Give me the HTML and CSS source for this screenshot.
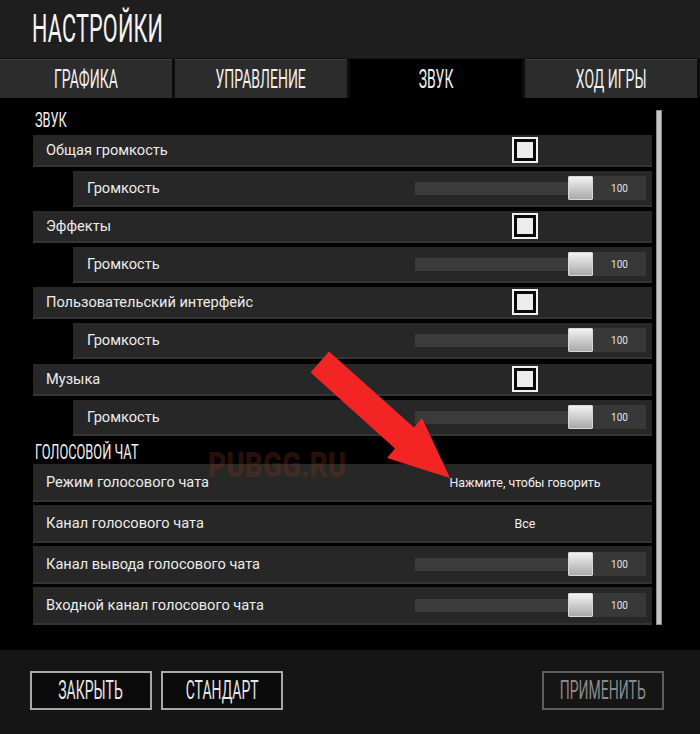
FILE: index.html
```html
<!DOCTYPE html>
<html lang="ru">
<head>
<meta charset="utf-8">
<title>Настройки</title>
<link rel="stylesheet" href="styles.css">
</head>
<body>
<div class="page">
  <header class="header">
    <h1 class="title"><span class="cond">НАСТРОЙКИ</span></h1>
  </header>
  <nav class="tabs">
    <div class="tab"><span class="cond">ГРАФИКА</span></div>
    <div class="tab"><span class="cond">УПРАВЛЕНИЕ</span></div>
    <div class="tab active"><span class="cond">ЗВУК</span></div>
    <div class="tab"><span class="cond">ХОД ИГРЫ</span></div>
  </nav>
  <main class="content">
    <div class="list">
      <h2 class="section first"><span class="cond">ЗВУК</span></h2>

      <div class="row"><span class="label">Общая громкость</span><div class="ctl"><span class="check"><span class="check-fill"></span></span></div></div>
      <div class="row sub"><span class="label">Громкость</span><div class="slider"><div class="track"></div><div class="thumb"></div><div class="value">100</div></div></div>

      <div class="row"><span class="label">Эффекты</span><div class="ctl"><span class="check"><span class="check-fill"></span></span></div></div>
      <div class="row sub"><span class="label">Громкость</span><div class="slider"><div class="track"></div><div class="thumb"></div><div class="value">100</div></div></div>

      <div class="row"><span class="label">Пользовательский интерфейс</span><div class="ctl"><span class="check"><span class="check-fill"></span></span></div></div>
      <div class="row sub"><span class="label">Громкость</span><div class="slider"><div class="track"></div><div class="thumb"></div><div class="value">100</div></div></div>

      <div class="row music"><span class="label">Музыка</span><div class="ctl"><span class="check"><span class="check-fill"></span></span></div></div>
      <div class="row sub"><span class="label">Громкость</span><div class="slider"><div class="track"></div><div class="thumb"></div><div class="value">100</div></div></div>

      <h2 class="section"><span class="cond">ГОЛОСОВОЙ ЧАТ</span></h2>

      <div class="row voice"><span class="label">Режим голосового чата</span><div class="ctl"><span class="opt">Нажмите, чтобы говорить</span></div></div>
      <div class="row voice"><span class="label">Канал голосового чата</span><div class="ctl"><span class="opt">Все</span></div></div>
      <div class="row voice"><span class="label">Канал вывода голосового чата</span><div class="slider"><div class="track"></div><div class="thumb"></div><div class="value">100</div></div></div>
      <div class="row voice"><span class="label">Входной канал голосового чата</span><div class="slider"><div class="track"></div><div class="thumb"></div><div class="value">100</div></div></div>
    </div>
    <div class="scrollbar"></div>
  </main>
  <footer class="footer">
    <button class="btn"><span class="cond">ЗАКРЫТЬ</span></button>
    <button class="btn"><span class="cond">СТАНДАРТ</span></button>
    <span class="spacer"></span>
    <button class="btn disabled"><span class="cond">ПРИМЕНИТЬ</span></button>
  </footer>

  <div class="watermark"><span class="wm-text">PUBGG.RU</span></div>
  <svg class="arrow" width="700" height="734" viewBox="0 0 700 734" aria-hidden="true">
    <polygon points="310.6,372.4 329,351.6 414,427.6 422,418 450,478 387,458 395,448.4" fill="#f22424"/>
  </svg>
</div>
</body>
</html>
```
FILE: styles.css
```css
* { box-sizing: border-box; }
html, body { margin: 0; padding: 0; }
body {
  background: #000;
  font-family: Roboto, "Noto Sans", "DejaVu Sans", sans-serif;
  color: #e8e8e8;
}
.page {
  position: relative;
  width: 700px;
  height: 734px;
  overflow: hidden;
  background: #000;
  display: flex;
  flex-direction: column;
}
.cond {
  display: inline-block;
  transform: scaleX(0.56);
  white-space: nowrap;
}

/* header */
.header {
  height: 58px;
  background: #1e1e1e;
  padding-left: 32px;
  display: flex;
  align-items: center;
}
.title {
  margin: 0;
  font-weight: 400;
  font-size: 39px;
  line-height: 1;
  color: #f4f4f4;
  letter-spacing: 0.3px;
}
.title .cond { transform-origin: left center; transform: scaleX(0.555); }

/* tabs */
.tabs {
  height: 40px;
  display: grid;
  grid-template-columns: 172px 172px 172px 172px;
  column-gap: 3px;
  background: #0d0d0d;
  border-top: 1px solid #141414;
}
.tab {
  background: #2c2c2c;
  border-top: 1px solid #3c3c3c;
  display: flex;
  align-items: center;
  justify-content: center;
  font-size: 25px;
  color: #f0f0f0;
  line-height: 1;
}
.tab.active { background: #000; border-top-color: #000; }

/* content */
.content {
  flex: 1;
  display: flex;
  padding-left: 33px;
  background: #000;
}
.list {
  width: 619px;
  display: flex;
  flex-direction: column;
  gap: 4px;
}
.section {
  margin: 0;
  font-weight: 400;
  font-size: 21px;
  line-height: 0.8;
  color: #f0f0f0;
  padding-left: 2px;
  height: 21px;
  display: flex;
  align-items: flex-end;
  flex-shrink: 0;
}
.section .cond { transform-origin: left center; transform: scaleX(0.61); }
.section.first { height: 33px; padding-bottom: 2px; }

.row {
  height: 32px;
  background: #272727;
  border-bottom: 2px solid #343434;
  display: flex;
  align-items: center;
  padding-left: 13px;
  flex-shrink: 0;
}
.row.music { margin-top: 1px; }
.row.sub {
  height: 36px;
  margin-left: 40px;
  padding-left: 14px;
  padding-right: 5px;
}
.row.voice {
  height: 38px;
  padding-right: 5px;
  margin-top: -1px;
}
.label {
  flex: 1;
  font-size: 14.6px;
  color: #ececec;
  white-space: nowrap;
}
.ctl {
  width: 254px;
  display: flex;
  justify-content: center;
  align-items: center;
}
.row.voice .ctl { margin-right: -5px; }
.check {
  width: 26px;
  height: 26px;
  border: 2px solid #f2f2f2;
  background: #0a0a0a;
  padding: 3px;
  display: block;
}
.check-fill {
  display: block;
  width: 16px;
  height: 16px;
  background: #ececec;
}
.opt {
  font-size: 12.4px;
  color: #f0f0f0;
}

.slider {
  display: flex;
  align-items: center;
  width: 232px;
  height: 24px;
}
.track {
  width: 154px;
  height: 13px;
  background: #3b3b3b;
}
.thumb {
  width: 25px;
  height: 24px;
  margin-left: -1px;
  background: linear-gradient(#f2f2f2, #a9a9a9);
  border: 1px solid #d8d8d8;
  border-radius: 1px;
}
.value {
  width: 53px;
  height: 24px;
  background: #383838;
  font-size: 10px;
  color: #e4e4e4;
  display: flex;
  align-items: center;
  justify-content: center;
}

.scrollbar {
  width: 6px;
  height: 515px;
  margin-top: 12px;
  margin-left: 4px;
  background: #c4c4c4;
  border: 1px solid #8a8a8a;
}

/* footer */
.footer {
  height: 84px;
  background: #151515;
  display: flex;
  align-items: center;
  padding: 0 36px 0 30px;
  gap: 9px;
  flex-shrink: 0;
}
.spacer { flex: 1; }
.btn {
  width: 122px;
  height: 39px;
  background: #0b0b0b;
  border: 2px solid #a8a8a8;
  color: #e6e6e6;
  font-family: Roboto, "Noto Sans", sans-serif;
  font-size: 25px;
  line-height: 1;
  padding: 0;
  display: flex;
  align-items: center;
  justify-content: center;
  margin-top: -3px;
}
.btn.disabled {
  border-color: #5e5e5e;
  color: #8a8a8a;
  background: #151515;
}

/* overlays */
.watermark {
  position: absolute;
  left: 208px;
  top: 448px;
  font-family: Roboto, sans-serif;
  font-weight: 900;
  font-size: 35px;
  line-height: 1;
  color: rgba(125, 52, 24, 0.32);
  pointer-events: none;
}
.wm-text {
  display: inline-block;
  transform: scaleX(0.8);
  transform-origin: left center;
}
.arrow {
  position: absolute;
  left: 0;
  top: 0;
  pointer-events: none;
}
```
